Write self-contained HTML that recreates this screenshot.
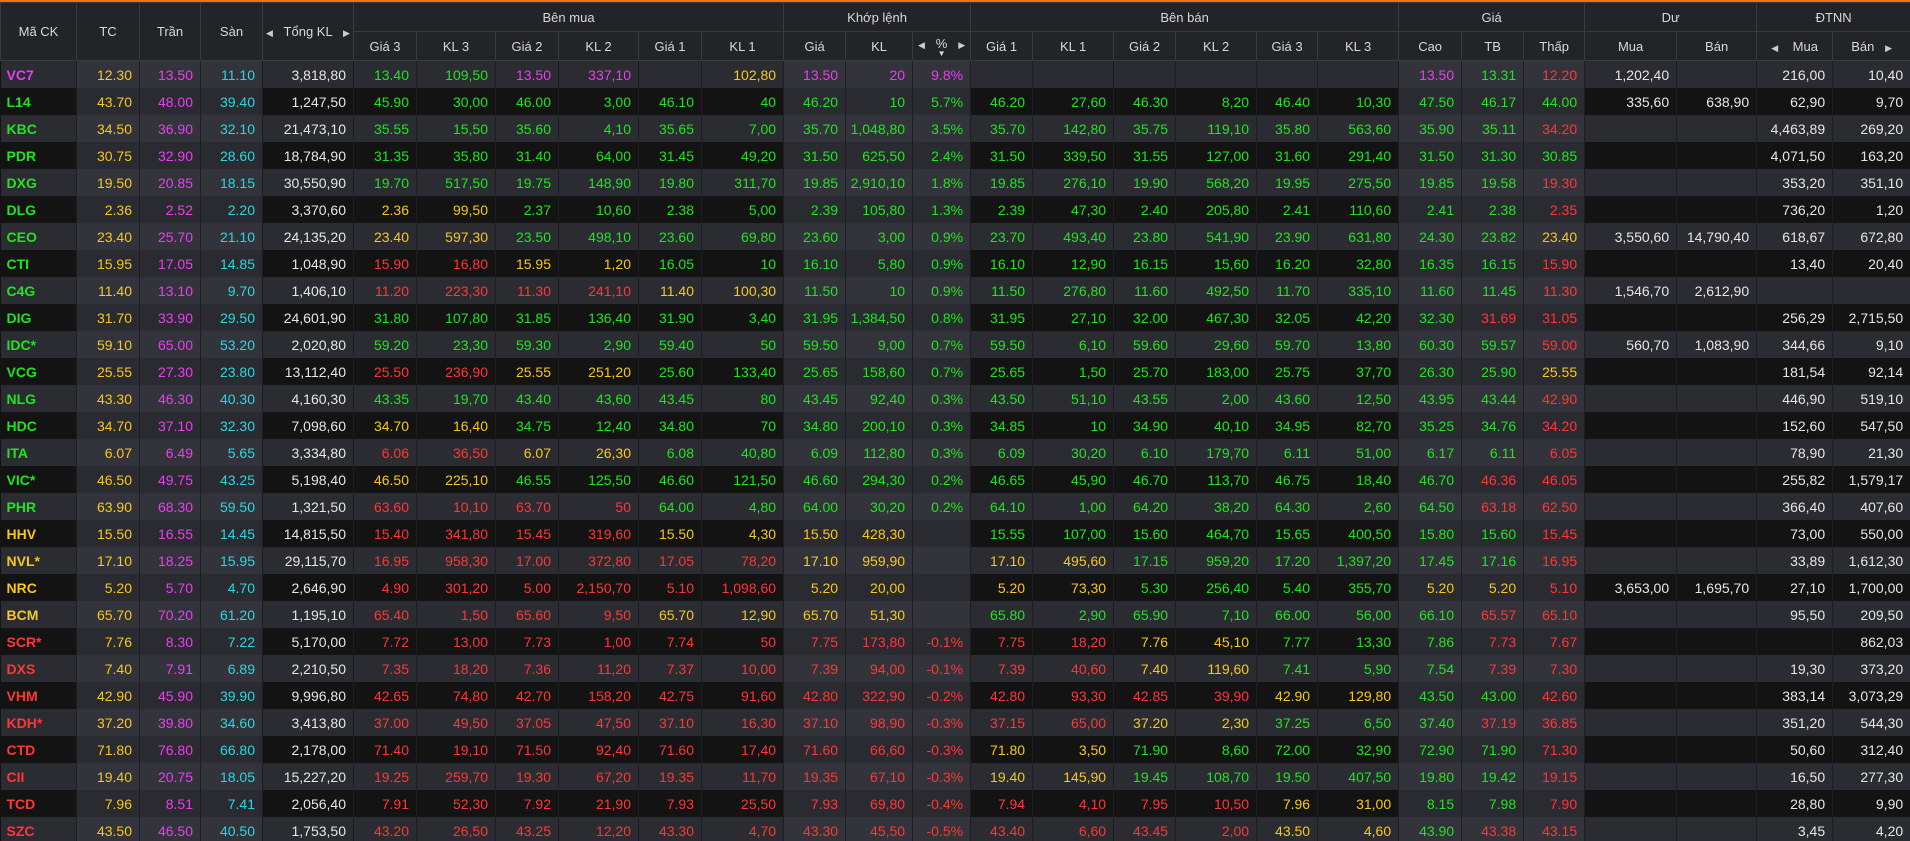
<!DOCTYPE html>
<html><head><meta charset="utf-8">
<style>
html,body{margin:0;padding:0;background:#131313;width:1910px;height:841px;overflow:hidden}
.top{height:2px;background:#e8731a}
table{border-collapse:collapse;table-layout:fixed;width:1910px;font-family:"Liberation Sans",Arial,sans-serif;font-size:14px}
th{background:#232428;color:#d8d8d8;font-weight:normal;font-size:13px;border:1px solid #3a3b40;text-align:center;padding:0;white-space:nowrap}
tr.h1 th{height:28px}
tr.h2 th{height:28px}
td{height:27px;padding:0 7px 0 0;text-align:right;color:#e6e6e6;border-right:1px solid #1e1e22;white-space:nowrap;overflow:hidden}
tr.a td{background:#2b2c31}
tr.b td{background:#131313}
tr.a td:nth-child(2),tr.a td:nth-child(3),tr.a td:nth-child(4),tr.a td:nth-child(12),tr.a td:nth-child(13),tr.a td:nth-child(14),tr.a td:nth-child(21),tr.a td:nth-child(22),tr.a td:nth-child(23){background:#33343b}
tr.b td:nth-child(2),tr.b td:nth-child(3),tr.b td:nth-child(4),tr.b td:nth-child(12),tr.b td:nth-child(13),tr.b td:nth-child(14),tr.b td:nth-child(21),tr.b td:nth-child(22),tr.b td:nth-child(23){background:#2a2b31}
td:first-child{text-align:left;padding-left:6px;font-weight:bold}
.g{color:#1fe51f}.r{color:#ff3636}.y{color:#f6c81a}.m{color:#e83ef0}.c{color:#2cd6e0}
.ar{font-size:9px;color:#ccc}
</style></head><body>
<div class="top"></div>
<table>
<colgroup>
<col style="width:76px"><col style="width:63px"><col style="width:61px"><col style="width:62px"><col style="width:91px">
<col style="width:63px"><col style="width:79px"><col style="width:63px"><col style="width:80px"><col style="width:63px"><col style="width:82px">
<col style="width:62px"><col style="width:67px"><col style="width:58px">
<col style="width:62px"><col style="width:81px"><col style="width:62px"><col style="width:81px"><col style="width:61px"><col style="width:81px">
<col style="width:63px"><col style="width:62px"><col style="width:61px">
<col style="width:92px"><col style="width:80px"><col style="width:76px"><col style="width:78px">
</colgroup>
<tr class="h1"><th rowspan="2">Mã CK</th><th rowspan="2">TC</th><th rowspan="2">Trần</th><th rowspan="2">Sàn</th><th rowspan="2"><span class="ar">◀</span>&nbsp;&nbsp; Tổng KL &nbsp;&nbsp;<span class="ar">▶</span></th><th colspan="6">Bên mua</th><th colspan="3">Khớp lệnh</th><th colspan="6">Bên bán</th><th colspan="3">Giá</th><th colspan="2">Dư</th><th colspan="2">ĐTNN</th></tr>
<tr class="h2"><th>Giá 3</th><th>KL 3</th><th>Giá 2</th><th>KL 2</th><th>Giá 1</th><th>KL 1</th><th>Giá</th><th>KL</th><th><span class="ar">◀</span>&nbsp;&nbsp;&nbsp;%&nbsp;&nbsp;&nbsp;<span class="ar">▶</span><div style="font-size:8px;line-height:6px">▼</div></th><th>Giá 1</th><th>KL 1</th><th>Giá 2</th><th>KL 2</th><th>Giá 3</th><th>KL 3</th><th>Cao</th><th>TB</th><th>Thấp</th><th>Mua</th><th>Bán</th><th><span class="ar">◀</span>&nbsp;&nbsp;&nbsp;&nbsp;Mua</th><th>Bán&nbsp;&nbsp;&nbsp;<span class="ar">▶</span></th></tr>

<tr class="a"><td class="m">VC7</td><td class="y">12.30</td><td class="m">13.50</td><td class="c">11.10</td><td>3,818,80</td><td class="g">13.40</td><td class="g">109,50</td><td class="m">13.50</td><td class="m">337,10</td><td></td><td class="y">102,80</td><td class="m">13.50</td><td class="m">20</td><td class="m">9.8%</td><td></td><td></td><td></td><td></td><td></td><td></td><td class="m">13.50</td><td class="g">13.31</td><td class="r">12.20</td><td>1,202,40</td><td></td><td>216,00</td><td>10,40</td></tr>
<tr class="b"><td class="g">L14</td><td class="y">43.70</td><td class="m">48.00</td><td class="c">39.40</td><td>1,247,50</td><td class="g">45.90</td><td class="g">30,00</td><td class="g">46.00</td><td class="g">3,00</td><td class="g">46.10</td><td class="g">40</td><td class="g">46.20</td><td class="g">10</td><td class="g">5.7%</td><td class="g">46.20</td><td class="g">27,60</td><td class="g">46.30</td><td class="g">8,20</td><td class="g">46.40</td><td class="g">10,30</td><td class="g">47.50</td><td class="g">46.17</td><td class="g">44.00</td><td>335,60</td><td>638,90</td><td>62,90</td><td>9,70</td></tr>
<tr class="a"><td class="g">KBC</td><td class="y">34.50</td><td class="m">36.90</td><td class="c">32.10</td><td>21,473,10</td><td class="g">35.55</td><td class="g">15,50</td><td class="g">35.60</td><td class="g">4,10</td><td class="g">35.65</td><td class="g">7,00</td><td class="g">35.70</td><td class="g">1,048,80</td><td class="g">3.5%</td><td class="g">35.70</td><td class="g">142,80</td><td class="g">35.75</td><td class="g">119,10</td><td class="g">35.80</td><td class="g">563,60</td><td class="g">35.90</td><td class="g">35.11</td><td class="r">34.20</td><td></td><td></td><td>4,463,89</td><td>269,20</td></tr>
<tr class="b"><td class="g">PDR</td><td class="y">30.75</td><td class="m">32.90</td><td class="c">28.60</td><td>18,784,90</td><td class="g">31.35</td><td class="g">35,80</td><td class="g">31.40</td><td class="g">64,00</td><td class="g">31.45</td><td class="g">49,20</td><td class="g">31.50</td><td class="g">625,50</td><td class="g">2.4%</td><td class="g">31.50</td><td class="g">339,50</td><td class="g">31.55</td><td class="g">127,00</td><td class="g">31.60</td><td class="g">291,40</td><td class="g">31.50</td><td class="g">31.30</td><td class="g">30.85</td><td></td><td></td><td>4,071,50</td><td>163,20</td></tr>
<tr class="a"><td class="g">DXG</td><td class="y">19.50</td><td class="m">20.85</td><td class="c">18.15</td><td>30,550,90</td><td class="g">19.70</td><td class="g">517,50</td><td class="g">19.75</td><td class="g">148,90</td><td class="g">19.80</td><td class="g">311,70</td><td class="g">19.85</td><td class="g">2,910,10</td><td class="g">1.8%</td><td class="g">19.85</td><td class="g">276,10</td><td class="g">19.90</td><td class="g">568,20</td><td class="g">19.95</td><td class="g">275,50</td><td class="g">19.85</td><td class="g">19.58</td><td class="r">19.30</td><td></td><td></td><td>353,20</td><td>351,10</td></tr>
<tr class="b"><td class="g">DLG</td><td class="y">2.36</td><td class="m">2.52</td><td class="c">2.20</td><td>3,370,60</td><td class="y">2.36</td><td class="y">99,50</td><td class="g">2.37</td><td class="g">10,60</td><td class="g">2.38</td><td class="g">5,00</td><td class="g">2.39</td><td class="g">105,80</td><td class="g">1.3%</td><td class="g">2.39</td><td class="g">47,30</td><td class="g">2.40</td><td class="g">205,80</td><td class="g">2.41</td><td class="g">110,60</td><td class="g">2.41</td><td class="g">2.38</td><td class="r">2.35</td><td></td><td></td><td>736,20</td><td>1,20</td></tr>
<tr class="a"><td class="g">CEO</td><td class="y">23.40</td><td class="m">25.70</td><td class="c">21.10</td><td>24,135,20</td><td class="y">23.40</td><td class="y">597,30</td><td class="g">23.50</td><td class="g">498,10</td><td class="g">23.60</td><td class="g">69,80</td><td class="g">23.60</td><td class="g">3,00</td><td class="g">0.9%</td><td class="g">23.70</td><td class="g">493,40</td><td class="g">23.80</td><td class="g">541,90</td><td class="g">23.90</td><td class="g">631,80</td><td class="g">24.30</td><td class="g">23.82</td><td class="y">23.40</td><td>3,550,60</td><td>14,790,40</td><td>618,67</td><td>672,80</td></tr>
<tr class="b"><td class="g">CTI</td><td class="y">15.95</td><td class="m">17.05</td><td class="c">14.85</td><td>1,048,90</td><td class="r">15.90</td><td class="r">16,80</td><td class="y">15.95</td><td class="y">1,20</td><td class="g">16.05</td><td class="g">10</td><td class="g">16.10</td><td class="g">5,80</td><td class="g">0.9%</td><td class="g">16.10</td><td class="g">12,90</td><td class="g">16.15</td><td class="g">15,60</td><td class="g">16.20</td><td class="g">32,80</td><td class="g">16.35</td><td class="g">16.15</td><td class="r">15.90</td><td></td><td></td><td>13,40</td><td>20,40</td></tr>
<tr class="a"><td class="g">C4G</td><td class="y">11.40</td><td class="m">13.10</td><td class="c">9.70</td><td>1,406,10</td><td class="r">11.20</td><td class="r">223,30</td><td class="r">11.30</td><td class="r">241,10</td><td class="y">11.40</td><td class="y">100,30</td><td class="g">11.50</td><td class="g">10</td><td class="g">0.9%</td><td class="g">11.50</td><td class="g">276,80</td><td class="g">11.60</td><td class="g">492,50</td><td class="g">11.70</td><td class="g">335,10</td><td class="g">11.60</td><td class="g">11.45</td><td class="r">11.30</td><td>1,546,70</td><td>2,612,90</td><td></td><td></td></tr>
<tr class="b"><td class="g">DIG</td><td class="y">31.70</td><td class="m">33.90</td><td class="c">29.50</td><td>24,601,90</td><td class="g">31.80</td><td class="g">107,80</td><td class="g">31.85</td><td class="g">136,40</td><td class="g">31.90</td><td class="g">3,40</td><td class="g">31.95</td><td class="g">1,384,50</td><td class="g">0.8%</td><td class="g">31.95</td><td class="g">27,10</td><td class="g">32.00</td><td class="g">467,30</td><td class="g">32.05</td><td class="g">42,20</td><td class="g">32.30</td><td class="r">31.69</td><td class="r">31.05</td><td></td><td></td><td>256,29</td><td>2,715,50</td></tr>
<tr class="a"><td class="g">IDC*</td><td class="y">59.10</td><td class="m">65.00</td><td class="c">53.20</td><td>2,020,80</td><td class="g">59.20</td><td class="g">23,30</td><td class="g">59.30</td><td class="g">2,90</td><td class="g">59.40</td><td class="g">50</td><td class="g">59.50</td><td class="g">9,00</td><td class="g">0.7%</td><td class="g">59.50</td><td class="g">6,10</td><td class="g">59.60</td><td class="g">29,60</td><td class="g">59.70</td><td class="g">13,80</td><td class="g">60.30</td><td class="g">59.57</td><td class="r">59.00</td><td>560,70</td><td>1,083,90</td><td>344,66</td><td>9,10</td></tr>
<tr class="b"><td class="g">VCG</td><td class="y">25.55</td><td class="m">27.30</td><td class="c">23.80</td><td>13,112,40</td><td class="r">25.50</td><td class="r">236,90</td><td class="y">25.55</td><td class="y">251,20</td><td class="g">25.60</td><td class="g">133,40</td><td class="g">25.65</td><td class="g">158,60</td><td class="g">0.7%</td><td class="g">25.65</td><td class="g">1,50</td><td class="g">25.70</td><td class="g">183,00</td><td class="g">25.75</td><td class="g">37,70</td><td class="g">26.30</td><td class="g">25.90</td><td class="y">25.55</td><td></td><td></td><td>181,54</td><td>92,14</td></tr>
<tr class="a"><td class="g">NLG</td><td class="y">43.30</td><td class="m">46.30</td><td class="c">40.30</td><td>4,160,30</td><td class="g">43.35</td><td class="g">19,70</td><td class="g">43.40</td><td class="g">43,60</td><td class="g">43.45</td><td class="g">80</td><td class="g">43.45</td><td class="g">92,40</td><td class="g">0.3%</td><td class="g">43.50</td><td class="g">51,10</td><td class="g">43.55</td><td class="g">2,00</td><td class="g">43.60</td><td class="g">12,50</td><td class="g">43.95</td><td class="g">43.44</td><td class="r">42.90</td><td></td><td></td><td>446,90</td><td>519,10</td></tr>
<tr class="b"><td class="g">HDC</td><td class="y">34.70</td><td class="m">37.10</td><td class="c">32.30</td><td>7,098,60</td><td class="y">34.70</td><td class="y">16,40</td><td class="g">34.75</td><td class="g">12,40</td><td class="g">34.80</td><td class="g">70</td><td class="g">34.80</td><td class="g">200,10</td><td class="g">0.3%</td><td class="g">34.85</td><td class="g">10</td><td class="g">34.90</td><td class="g">40,10</td><td class="g">34.95</td><td class="g">82,70</td><td class="g">35.25</td><td class="g">34.76</td><td class="r">34.20</td><td></td><td></td><td>152,60</td><td>547,50</td></tr>
<tr class="a"><td class="g">ITA</td><td class="y">6.07</td><td class="m">6.49</td><td class="c">5.65</td><td>3,334,80</td><td class="r">6.06</td><td class="r">36,50</td><td class="y">6.07</td><td class="y">26,30</td><td class="g">6.08</td><td class="g">40,80</td><td class="g">6.09</td><td class="g">112,80</td><td class="g">0.3%</td><td class="g">6.09</td><td class="g">30,20</td><td class="g">6.10</td><td class="g">179,70</td><td class="g">6.11</td><td class="g">51,00</td><td class="g">6.17</td><td class="g">6.11</td><td class="r">6.05</td><td></td><td></td><td>78,90</td><td>21,30</td></tr>
<tr class="b"><td class="g">VIC*</td><td class="y">46.50</td><td class="m">49.75</td><td class="c">43.25</td><td>5,198,40</td><td class="y">46.50</td><td class="y">225,10</td><td class="g">46.55</td><td class="g">125,50</td><td class="g">46.60</td><td class="g">121,50</td><td class="g">46.60</td><td class="g">294,30</td><td class="g">0.2%</td><td class="g">46.65</td><td class="g">45,90</td><td class="g">46.70</td><td class="g">113,70</td><td class="g">46.75</td><td class="g">18,40</td><td class="g">46.70</td><td class="r">46.36</td><td class="r">46.05</td><td></td><td></td><td>255,82</td><td>1,579,17</td></tr>
<tr class="a"><td class="g">PHR</td><td class="y">63.90</td><td class="m">68.30</td><td class="c">59.50</td><td>1,321,50</td><td class="r">63.60</td><td class="r">10,10</td><td class="r">63.70</td><td class="r">50</td><td class="g">64.00</td><td class="g">4,80</td><td class="g">64.00</td><td class="g">30,20</td><td class="g">0.2%</td><td class="g">64.10</td><td class="g">1,00</td><td class="g">64.20</td><td class="g">38,20</td><td class="g">64.30</td><td class="g">2,60</td><td class="g">64.50</td><td class="r">63.18</td><td class="r">62.50</td><td></td><td></td><td>366,40</td><td>407,60</td></tr>
<tr class="b"><td class="y">HHV</td><td class="y">15.50</td><td class="m">16.55</td><td class="c">14.45</td><td>14,815,50</td><td class="r">15.40</td><td class="r">341,80</td><td class="r">15.45</td><td class="r">319,60</td><td class="y">15.50</td><td class="y">4,30</td><td class="y">15.50</td><td class="y">428,30</td><td></td><td class="g">15.55</td><td class="g">107,00</td><td class="g">15.60</td><td class="g">464,70</td><td class="g">15.65</td><td class="g">400,50</td><td class="g">15.80</td><td class="g">15.60</td><td class="r">15.45</td><td></td><td></td><td>73,00</td><td>550,00</td></tr>
<tr class="a"><td class="y">NVL*</td><td class="y">17.10</td><td class="m">18.25</td><td class="c">15.95</td><td>29,115,70</td><td class="r">16.95</td><td class="r">958,30</td><td class="r">17.00</td><td class="r">372,80</td><td class="r">17.05</td><td class="r">78,20</td><td class="y">17.10</td><td class="y">959,90</td><td></td><td class="y">17.10</td><td class="y">495,60</td><td class="g">17.15</td><td class="g">959,20</td><td class="g">17.20</td><td class="g">1,397,20</td><td class="g">17.45</td><td class="g">17.16</td><td class="r">16.95</td><td></td><td></td><td>33,89</td><td>1,612,30</td></tr>
<tr class="b"><td class="y">NRC</td><td class="y">5.20</td><td class="m">5.70</td><td class="c">4.70</td><td>2,646,90</td><td class="r">4.90</td><td class="r">301,20</td><td class="r">5.00</td><td class="r">2,150,70</td><td class="r">5.10</td><td class="r">1,098,60</td><td class="y">5.20</td><td class="y">20,00</td><td></td><td class="y">5.20</td><td class="y">73,30</td><td class="g">5.30</td><td class="g">256,40</td><td class="g">5.40</td><td class="g">355,70</td><td class="y">5.20</td><td class="y">5.20</td><td class="r">5.10</td><td>3,653,00</td><td>1,695,70</td><td>27,10</td><td>1,700,00</td></tr>
<tr class="a"><td class="y">BCM</td><td class="y">65.70</td><td class="m">70.20</td><td class="c">61.20</td><td>1,195,10</td><td class="r">65.40</td><td class="r">1,50</td><td class="r">65.60</td><td class="r">9,50</td><td class="y">65.70</td><td class="y">12,90</td><td class="y">65.70</td><td class="y">51,30</td><td></td><td class="g">65.80</td><td class="g">2,90</td><td class="g">65.90</td><td class="g">7,10</td><td class="g">66.00</td><td class="g">56,00</td><td class="g">66.10</td><td class="r">65.57</td><td class="r">65.10</td><td></td><td></td><td>95,50</td><td>209,50</td></tr>
<tr class="b"><td class="r">SCR*</td><td class="y">7.76</td><td class="m">8.30</td><td class="c">7.22</td><td>5,170,00</td><td class="r">7.72</td><td class="r">13,00</td><td class="r">7.73</td><td class="r">1,00</td><td class="r">7.74</td><td class="r">50</td><td class="r">7.75</td><td class="r">173,80</td><td class="r">-0.1%</td><td class="r">7.75</td><td class="r">18,20</td><td class="y">7.76</td><td class="y">45,10</td><td class="g">7.77</td><td class="g">13,30</td><td class="g">7.86</td><td class="r">7.73</td><td class="r">7.67</td><td></td><td></td><td></td><td>862,03</td></tr>
<tr class="a"><td class="r">DXS</td><td class="y">7.40</td><td class="m">7.91</td><td class="c">6.89</td><td>2,210,50</td><td class="r">7.35</td><td class="r">18,20</td><td class="r">7.36</td><td class="r">11,20</td><td class="r">7.37</td><td class="r">10,00</td><td class="r">7.39</td><td class="r">94,00</td><td class="r">-0.1%</td><td class="r">7.39</td><td class="r">40,60</td><td class="y">7.40</td><td class="y">119,60</td><td class="g">7.41</td><td class="g">5,90</td><td class="g">7.54</td><td class="r">7.39</td><td class="r">7.30</td><td></td><td></td><td>19,30</td><td>373,20</td></tr>
<tr class="b"><td class="r">VHM</td><td class="y">42.90</td><td class="m">45.90</td><td class="c">39.90</td><td>9,996,80</td><td class="r">42.65</td><td class="r">74,80</td><td class="r">42.70</td><td class="r">158,20</td><td class="r">42.75</td><td class="r">91,60</td><td class="r">42.80</td><td class="r">322,90</td><td class="r">-0.2%</td><td class="r">42.80</td><td class="r">93,30</td><td class="r">42.85</td><td class="r">39,90</td><td class="y">42.90</td><td class="y">129,80</td><td class="g">43.50</td><td class="g">43.00</td><td class="r">42.60</td><td></td><td></td><td>383,14</td><td>3,073,29</td></tr>
<tr class="a"><td class="r">KDH*</td><td class="y">37.20</td><td class="m">39.80</td><td class="c">34.60</td><td>3,413,80</td><td class="r">37.00</td><td class="r">49,50</td><td class="r">37.05</td><td class="r">47,50</td><td class="r">37.10</td><td class="r">16,30</td><td class="r">37.10</td><td class="r">98,90</td><td class="r">-0.3%</td><td class="r">37.15</td><td class="r">65,00</td><td class="y">37.20</td><td class="y">2,30</td><td class="g">37.25</td><td class="g">6,50</td><td class="g">37.40</td><td class="r">37.19</td><td class="r">36.85</td><td></td><td></td><td>351,20</td><td>544,30</td></tr>
<tr class="b"><td class="r">CTD</td><td class="y">71.80</td><td class="m">76.80</td><td class="c">66.80</td><td>2,178,00</td><td class="r">71.40</td><td class="r">19,10</td><td class="r">71.50</td><td class="r">92,40</td><td class="r">71.60</td><td class="r">17,40</td><td class="r">71.60</td><td class="r">66,60</td><td class="r">-0.3%</td><td class="y">71.80</td><td class="y">3,50</td><td class="g">71.90</td><td class="g">8,60</td><td class="g">72.00</td><td class="g">32,90</td><td class="g">72.90</td><td class="g">71.90</td><td class="r">71.30</td><td></td><td></td><td>50,60</td><td>312,40</td></tr>
<tr class="a"><td class="r">CII</td><td class="y">19.40</td><td class="m">20.75</td><td class="c">18.05</td><td>15,227,20</td><td class="r">19.25</td><td class="r">259,70</td><td class="r">19.30</td><td class="r">67,20</td><td class="r">19.35</td><td class="r">11,70</td><td class="r">19.35</td><td class="r">67,10</td><td class="r">-0.3%</td><td class="y">19.40</td><td class="y">145,90</td><td class="g">19.45</td><td class="g">108,70</td><td class="g">19.50</td><td class="g">407,50</td><td class="g">19.80</td><td class="g">19.42</td><td class="r">19.15</td><td></td><td></td><td>16,50</td><td>277,30</td></tr>
<tr class="b"><td class="r">TCD</td><td class="y">7.96</td><td class="m">8.51</td><td class="c">7.41</td><td>2,056,40</td><td class="r">7.91</td><td class="r">52,30</td><td class="r">7.92</td><td class="r">21,90</td><td class="r">7.93</td><td class="r">25,50</td><td class="r">7.93</td><td class="r">69,80</td><td class="r">-0.4%</td><td class="r">7.94</td><td class="r">4,10</td><td class="r">7.95</td><td class="r">10,50</td><td class="y">7.96</td><td class="y">31,00</td><td class="g">8.15</td><td class="g">7.98</td><td class="r">7.90</td><td></td><td></td><td>28,80</td><td>9,90</td></tr>
<tr class="a"><td class="r">SZC</td><td class="y">43.50</td><td class="m">46.50</td><td class="c">40.50</td><td>1,753,50</td><td class="r">43.20</td><td class="r">26,50</td><td class="r">43.25</td><td class="r">12,20</td><td class="r">43.30</td><td class="r">4,70</td><td class="r">43.30</td><td class="r">45,50</td><td class="r">-0.5%</td><td class="r">43.40</td><td class="r">6,60</td><td class="r">43.45</td><td class="r">2,00</td><td class="y">43.50</td><td class="y">4,60</td><td class="g">43.90</td><td class="r">43.38</td><td class="r">43.15</td><td></td><td></td><td>3,45</td><td>4,20</td></tr>
</table>
</body></html>
